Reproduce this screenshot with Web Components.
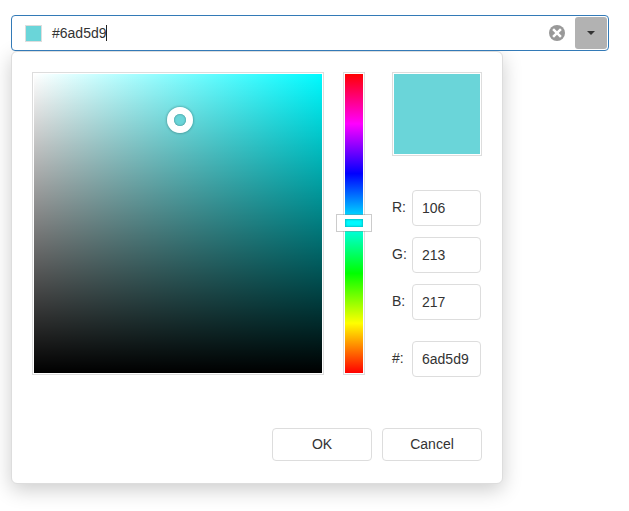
<!DOCTYPE html>
<html lang="en">
<head>
<meta charset="utf-8">
<title>Color box</title>
<style>
html,body{margin:0;background:#fff}
body{width:629px;height:511px;overflow:hidden;font:14px/20px "Liberation Sans",Arial,sans-serif;color:#333}
</style>
</head>
<body>
<color-box value="#6ad5d9"></color-box>
<script>
function define(name, html) {
  const t = document.createElement('template');
  t.innerHTML = '<style>*{box-sizing:border-box}:host{box-sizing:border-box}</style>' + html;
  customElements.define(name, class extends HTMLElement {
    connectedCallback() {
      if (this.shadowRoot) return;
      const root = this.attachShadow({mode: 'open'});
      root.append(t.content.cloneNode(true));
      root.querySelectorAll('[data-attr]').forEach(n => {
        n.textContent = this.getAttribute(n.dataset.attr) || '';
      });
    }
  });
}

define('color-field', `
<style>
:host{display:flex;align-items:center;height:36px;width:598px;padding:1px;border:1px solid #337ab7;border-radius:4px;background:#fff}
.swatch{width:17px;height:17px;margin-left:12px;border:1px solid #ddd;background:#6ad5d9}
.text{margin-left:10px;line-height:20px;color:#333}
.caret{width:1px;height:16px;margin-left:-1px;background:#222}
.clear{width:16px;height:16px;margin-left:auto;display:block}
.drop{width:32px;height:32px;margin-left:10px;border-radius:3px;background:#b2b2b2;display:flex;align-items:center;justify-content:center}
.drop svg{display:block}
</style>
<span class="swatch"></span><span class="text"><slot></slot></span><span class="caret"></span>
<svg class="clear" viewBox="0 0 16 16"><circle cx="8" cy="8" r="8" fill="#999"/><path d="M4.1 4.1 11.9 11.9M11.9 4.1 4.1 11.9" stroke="#fff" stroke-width="2.5"/></svg>
<span class="drop"><svg width="8" height="4" viewBox="0 0 8 4"><path d="M0 0H8L4 4Z" fill="#333"/></svg></span>`);

define('color-palette', `
<style>
:host{display:block;position:relative;width:292px;height:303px;border:1px solid #ddd;padding:1px}
.area{height:100%;background:linear-gradient(to bottom,transparent,#000),linear-gradient(to right,#fff,#00faff)}
.handle{position:absolute;left:134px;top:34px;width:26px;height:26px;border:7px solid #fff;border-radius:50%;box-shadow:0 0 2px 1px rgba(0,0,0,.2)}
.handle::after{content:"";position:absolute;inset:0;border-radius:50%;box-shadow:inset 0 0 2px rgba(0,0,0,.4);background:#6ad5d9}
</style>
<div class="area"></div><div class="handle"></div>`);

define('hue-scale', `
<style>
:host{display:block;position:relative;width:22px;height:303px;border:1px solid #ddd;padding:1px}
.bar{height:100%;background:linear-gradient(to bottom,#f00,#f0f,#00f,#0ff,#0f0,#ff0,#f00)}
.handle{position:absolute;left:-8px;top:141px;width:36px;height:18px;border:1px solid rgba(128,128,128,.4)}
.handle::before{content:"";position:absolute;inset:0;border-style:solid;border-color:#fff;border-width:4px 8px}
.handle::after{content:"";position:absolute;left:8px;right:8px;top:4px;bottom:4px;background:#00faff;box-shadow:inset 0 0 2px 1px rgba(0,0,0,.2)}
</style>
<div class="bar"></div><div class="handle"></div>`);

define('color-preview', `
<style>
:host{display:block;width:90px;height:84px;border:1px solid #ddd;padding:1px}
.fill{height:100%;background:#6ad5d9}
</style>
<div class="fill"></div>`);

define('channel-input', `
<style>
:host{display:flex;width:89px;height:36px;line-height:34px}
.label{width:20px}
.box{width:69px;height:36px;border:1px solid #ddd;border-radius:4px;padding:0 9px;line-height:34px}
</style>
<span class="label" data-attr="label"></span><span class="box"><slot></slot></span>`);

define('push-button', `
<style>
:host{display:flex;align-items:center;justify-content:center;width:100px;height:33px;padding-bottom:1px;border:1px solid #ddd;border-radius:4px;background:#fff}
</style>
<slot></slot>`);

define('color-popup', `
<style>
:host{display:flex;flex-direction:column;width:492px;height:433px;border:1px solid #ddd;border-radius:6px;background:#fff;padding:20px;box-shadow:0 6px 20px rgba(0,0,0,.2)}
.main{display:flex;height:305px}
hue-scale{margin-left:19px}
.side{margin-left:27px;display:flex;flex-direction:column}
.channels{display:flex;flex-direction:column;gap:11px;margin:34px 0 21px}
.actions{display:flex;justify-content:flex-end;gap:10px;margin-top:51px}
</style>
<div class="main"><color-palette></color-palette><hue-scale></hue-scale>
<div class="side"><color-preview></color-preview>
<div class="channels"><channel-input label="R:">106</channel-input><channel-input label="G:">213</channel-input><channel-input label="B:">217</channel-input></div>
<channel-input label="#:">6ad5d9</channel-input></div></div>
<div class="actions"><push-button>OK</push-button><push-button>Cancel</push-button></div>`);

define('color-box', `
<style>:host{display:block;padding:15px 0 0 11px} color-field{position:relative;z-index:1}</style>
<color-field><span data-attr="value"></span></color-field>
<color-popup></color-popup>`);
</script>
</body>
</html>
